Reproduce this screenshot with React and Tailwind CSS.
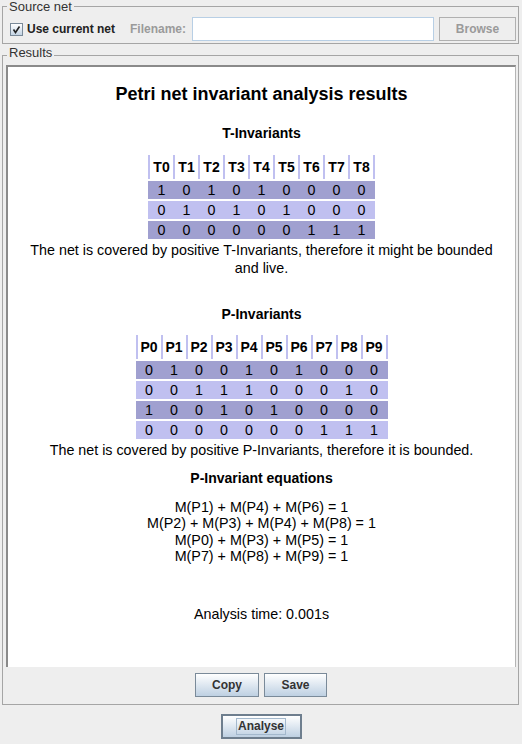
import React from "react";

const tRows = [
  [1, 0, 1, 0, 1, 0, 0, 0, 0],
  [0, 1, 0, 1, 0, 1, 0, 0, 0],
  [0, 0, 0, 0, 0, 0, 1, 1, 1],
];

const pRows = [
  [0, 1, 0, 0, 1, 0, 1, 0, 0, 0],
  [0, 0, 1, 1, 1, 0, 0, 0, 1, 0],
  [1, 0, 0, 1, 0, 1, 0, 0, 0, 0],
  [0, 0, 0, 0, 0, 0, 0, 1, 1, 1],
];

const equations = [
  "M(P1) + M(P4) + M(P6) = 1",
  "M(P2) + M(P3) + M(P4) + M(P8) = 1",
  "M(P0) + M(P3) + M(P5) = 1",
  "M(P7) + M(P8) + M(P9) = 1",
];

function InvariantTable({ prefix, rows }) {
  const cols = rows[0].length;
  return (
    <div className="mx-auto w-fit">
      <div className="flex h-[24px] border-r-2 border-[#c0c0f0]">
        {Array.from({ length: cols }).map((_, i) => (
          <div
            key={i}
            className="w-[25px] border-l-2 border-[#c0c0f0] flex items-center justify-center font-bold text-[14px]"
          >
            {prefix}
            {i}
          </div>
        ))}
      </div>
      {rows.map((row, r) => (
        <div
          key={r}
          className={`mt-[2px] flex h-[18px] pr-[2px] ${
            r % 2 === 0 ? "bg-[#a0a0d0]" : "bg-[#c0c0f0]"
          }`}
        >
          {row.map((v, i) => (
            <div key={i} className="w-[25px] pl-[2px] text-center text-[14.3px] leading-[18px]">
              {v}
            </div>
          ))}
        </div>
      ))}
    </div>
  );
}

function MetalButton({ children, className = "" }) {
  return (
    <button
      className={`h-[24px] border border-[#7a8a99] bg-gradient-to-b from-[#ffffff] to-[#bed0e2] font-bold text-[12px] text-[#333] ${className}`}
    >
      {children}
    </button>
  );
}

export default function App() {
  return (
    <div className="w-[522px] h-[744px] bg-[#eeeeee] font-['Liberation_Sans',Arial,sans-serif] text-[#333] flex flex-col">
      {/* Source net */}
      <fieldset className="ml-[2px] w-[517px] border border-[#a5a5a5] pl-[7px] pr-[2px] pb-[2px] pt-[5px]">
        <legend className="-ml-[3px] px-[2px] text-[13px] leading-[13px] pb-[0px]">Source net</legend>
        <div className="flex items-center h-[24px] -mt-[1px]">
          <span className="w-[13px] h-[13px] border border-[#7a8a99] bg-gradient-to-b from-[#ffffff] to-[#c4d4e4] flex items-center justify-center">
            <svg width="9" height="9" viewBox="0 0 9 9">
              <path d="M1.5 4.5 L3.5 7.5 L7.5 1.5" fill="none" stroke="#222" strokeWidth="1.6" />
            </svg>
          </span>
          <span className="ml-[4px] font-bold text-[12px] text-[#222]">Use current net</span>
          <span className="ml-[15px] font-bold text-[12px] text-[#9a9a9a]">Filename:</span>
          <input className="ml-[6px] w-[242px] h-[24px] border border-[#b8cfe5] bg-white outline-none" />
          <button className="ml-[5px] w-[77px] h-[24px] border border-[#b0b0b0] bg-[#eeeeee] font-bold text-[12px] text-[#9a9a9a]">
            Browse
          </button>
        </div>
      </fieldset>

      {/* Results */}
      <fieldset className="ml-[2px] w-[517px] mt-[3px] border border-[#a5a5a5] pl-[3px] pr-[2px] pb-[7px] pt-[2px]">
        <legend className="ml-[1px] px-[2px] text-[13px] leading-[12px] pb-[4px]">Results</legend>
        <div className="h-[602px] bg-white border-t-2 border-l-2 border-[#8a8a8a] border-r border-r-[#b5b5b5] text-black text-center text-[14.3px]">
          <h1 className="mt-[16px] font-bold text-[18px] leading-[22px]">Petri net invariant analysis results</h1>

          <h2 className="mt-[19px] font-bold text-[14px] leading-[18px]">T-Invariants</h2>
          <div className="mt-[13px]">
            <InvariantTable prefix="T" rows={tRows} />
          </div>
          <p className="mt-[2px] leading-[18px] px-[16px]">
            The net is covered by positive T-Invariants, therefore it might be bounded and live.
          </p>

          <h2 className="mt-[28px] font-bold text-[14px] leading-[18px]">P-Invariants</h2>
          <div className="mt-[12px]">
            <InvariantTable prefix="P" rows={pRows} />
          </div>
          <p className="mt-[2px] leading-[18px]">
            The net is covered by positive P-Invariants, therefore it is bounded.
          </p>

          <h2 className="mt-[10px] font-bold text-[14px] leading-[18px]">P-Invariant equations</h2>
          <div className="mt-[12px] leading-[16.4px]">
            {equations.map((e) => (
              <div key={e}>{e}</div>
            ))}
          </div>

          <p className="mt-[40px] leading-[18px]">Analysis time: 0.001s</p>
        </div>
        <div className="mt-[6px] flex justify-center gap-[5px]">
          <MetalButton className="w-[64px]">Copy</MetalButton>
          <MetalButton className="w-[63px]">Save</MetalButton>
        </div>
      </fieldset>

      <div className="mt-[9px] flex justify-center">
        <button className="w-[81px] h-[25px] border-2 border-[#6e7e8e] bg-gradient-to-b from-[#ffffff] to-[#bed0e2] font-bold text-[12px] text-[#333] flex items-center justify-center">
          <span className="border border-[#a3b8cc] px-[1px] leading-[15px]">Analyse</span>
        </button>
      </div>
    </div>
  );
}
